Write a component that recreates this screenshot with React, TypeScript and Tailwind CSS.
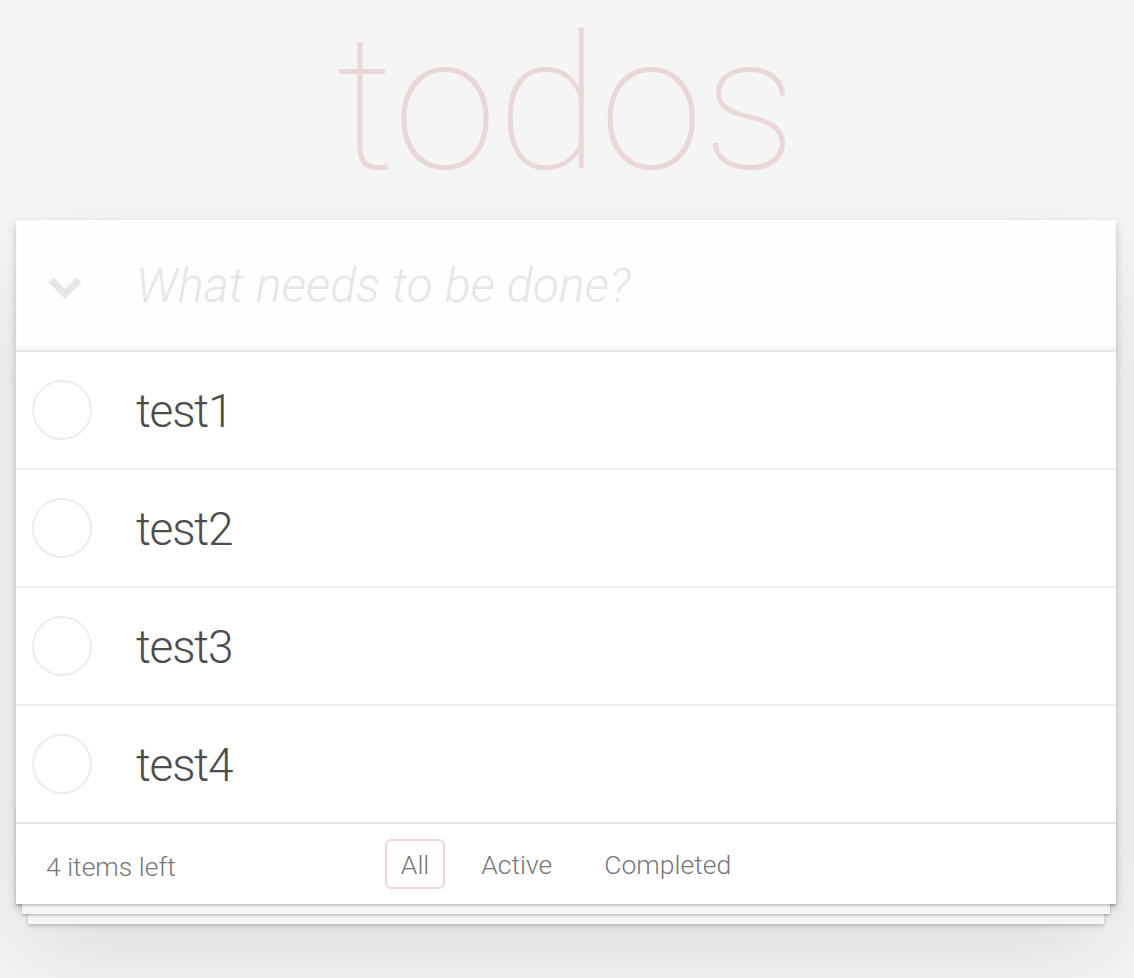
import React from "react";

const todos = ["test1", "test2", "test3", "test4"];

const filters = [
  { label: "All", selected: true },
  { label: "Active", selected: false },
  { label: "Completed", selected: false },
];

// thin grey ring used as the (unchecked) toggle
const ToggleCircle = () => (
  <svg width="60" height="60" viewBox="0 0 60 60" className="shrink-0">
    <circle cx="30" cy="30" r="29" fill="none" stroke="#ededed" strokeWidth="2" />
  </svg>
);

const App = () => {
  return (
    <div className="min-h-screen bg-[#f5f5f5] font-['Roboto','Helvetica_Neue',Arial,sans-serif] font-light text-[#4d4d4d] antialiased">
      <div className="ml-[16px] w-[1100px] pb-[74px]">
        <h1 className="-mt-[7px] h-[227px] text-center text-[188px] leading-[222px] font-thin text-[rgba(175,47,47,0.15)]">
          todos
        </h1>

        <section className="relative bg-white shadow-[0_4px_8px_0_rgba(0,0,0,0.2),0_50px_100px_0_rgba(0,0,0,0.1)]">
          <header className="flex h-[130px] items-center bg-[rgba(0,0,0,0.003)] shadow-[inset_0_-4px_2px_rgba(0,0,0,0.03)]">
            <div className="flex w-[120px] shrink-0 justify-center pr-[22px] pt-[6px]">
              <svg width="34" height="22" viewBox="0 0 34 22">
                <polyline
                  points="3,3 17,17 31,3"
                  fill="none"
                  stroke="#e6e6e6"
                  strokeWidth="7"
                />
              </svg>
            </div>
            <input
              className="min-w-0 flex-1 bg-transparent text-[48px] leading-[67px] font-light tracking-[0.2px] text-[#4d4d4d] outline-none placeholder:font-light placeholder:italic placeholder:text-[#e6e6e6]"
              placeholder="What needs to be done?"
            />
          </header>

          <ul className="relative z-[2] border-t-2 border-[#e6e6e6]">
            {todos.map((t, i) => (
              <li
                key={t}
                className={`flex h-[116px] items-center pl-[16px] ${
                  i < todos.length - 1 ? "box-content border-b-2 border-[#ededed]" : ""
                }`}
              >
                <ToggleCircle />
                <span className="ml-[44px] pt-[2px] text-[46px] leading-[58px] tracking-[-1.2px] text-[#4d4d4d]">
                  {t}
                </span>
              </li>
            ))}
          </ul>

          <footer className="relative flex h-[82px] items-center border-t-2 border-[#e6e6e6] px-[30px] text-[26.5px] text-[#777] before:pointer-events-none before:absolute before:inset-x-0 before:bottom-0 before:h-[100px] before:content-[''] before:shadow-[0_2px_2px_rgba(0,0,0,0.2),0_16px_0_-6px_#f6f6f6,0_18px_2px_-6px_rgba(0,0,0,0.2),0_32px_0_-12px_#f6f6f6,0_34px_4px_-12px_rgba(0,0,0,0.2)]">
            <span className="relative pt-[6px]">4 items left</span>
            <ul className="absolute inset-x-0 flex justify-center gap-[8px]">
              {filters.map((f) => (
                <li key={f.label}>
                  <a
                    href="#"
                    className={`m-[6px] block rounded-[6px] border-2 px-[14px] pt-[7px] pb-[5px] leading-[34px] ${
                      f.selected ? "border-[rgba(175,47,47,0.2)]" : "border-transparent"
                    }`}
                  >
                    {f.label}
                  </a>
                </li>
              ))}
            </ul>
          </footer>
        </section>
      </div>
    </div>
  );
};

export default App;
